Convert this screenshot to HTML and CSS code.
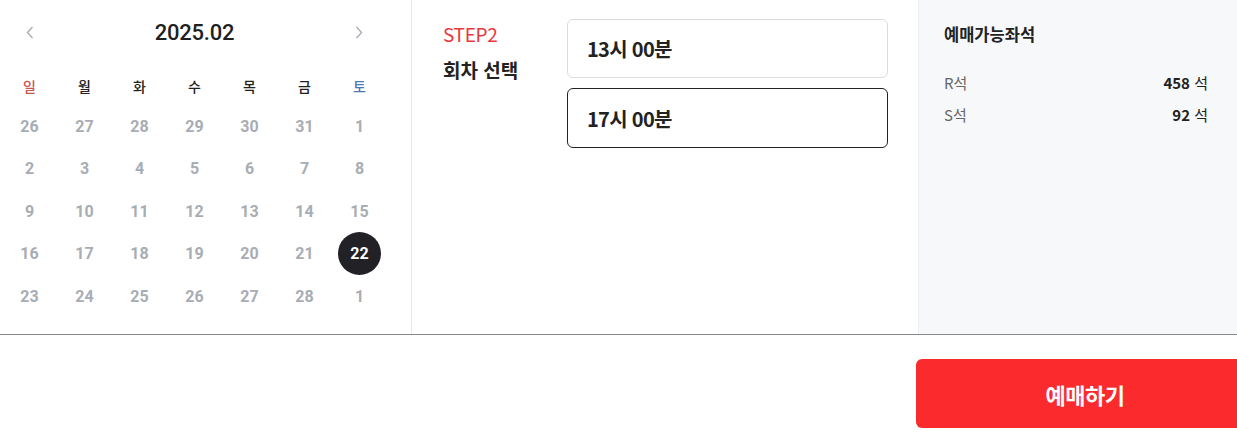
FILE: index.html
```html
<!DOCTYPE html>
<html lang="ko">
<head>
<meta charset="utf-8">
<link rel="stylesheet" href="styles.css">
</head>
<body>
<div class="page">
  <div class="top">
    <section class="calendar">
      <div class="cal-head">
        <button class="nav prev" aria-label="이전 달"><svg width="8" height="13" viewBox="0 0 8 13"><path d="M6.5 1 L1.5 6.5 L6.5 12" fill="none" stroke="#a9adb5" stroke-width="1.4"/></svg></button>
        <div class="month">2025.02</div>
        <button class="nav next" aria-label="다음 달"><svg width="8" height="13" viewBox="0 0 8 13"><path d="M1.5 1 L6.5 6.5 L1.5 12" fill="none" stroke="#a9adb5" stroke-width="1.4"/></svg></button>
      </div>
      <div class="grid">
        <div class="wd sun">일</div><div class="wd">월</div><div class="wd">화</div><div class="wd">수</div><div class="wd">목</div><div class="wd">금</div><div class="wd sat">토</div>
        <div class="d">26</div><div class="d">27</div><div class="d">28</div><div class="d">29</div><div class="d">30</div><div class="d">31</div><div class="d">1</div>
        <div class="d">2</div><div class="d">3</div><div class="d">4</div><div class="d">5</div><div class="d">6</div><div class="d">7</div><div class="d">8</div>
        <div class="d">9</div><div class="d">10</div><div class="d">11</div><div class="d">12</div><div class="d">13</div><div class="d">14</div><div class="d">15</div>
        <div class="d">16</div><div class="d">17</div><div class="d">18</div><div class="d">19</div><div class="d">20</div><div class="d">21</div><div class="d"><span class="sel">22</span></div>
        <div class="d">23</div><div class="d">24</div><div class="d">25</div><div class="d">26</div><div class="d">27</div><div class="d">28</div><div class="d">1</div>
      </div>
    </section>
    <section class="session">
      <div class="label">
        <div class="step">STEP2</div>
        <div class="title">회차 선택</div>
      </div>
      <div class="times">
        <div class="time">13시 00분</div>
        <div class="time active">17시 00분</div>
      </div>
    </section>
    <aside class="seats">
      <div class="seats-title">예매가능좌석</div>
      <div class="seat-row"><span class="grade">R석</span><span class="count"><b>458</b> 석</span></div>
      <div class="seat-row"><span class="grade">S석</span><span class="count"><b>92</b> 석</span></div>
    </aside>
  </div>
  <div class="bottom">
    <button class="book">예매하기</button>
  </div>
</div>
</body>
</html>
```
FILE: styles.css
```css
* { box-sizing: border-box; }
html, body { margin: 0; padding: 0; background: #fff; }
body {
  font-family: "Noto Sans CJK KR", "Noto Sans", sans-serif;
  color: #222;
  overflow: hidden;
  width: 1237px;
  height: 436px;
}
.page { width: 1237px; }
.top {
  display: flex;
  height: 335px;
  border-bottom: 1px solid #8a8a8a;
}
.calendar {
  width: 412px;
  border-right: 1px solid #e8e8e8;
  padding-left: 2px;
}
.cal-head {
  height: 67px;
  width: 385px;
  display: flex;
  align-items: center;
  justify-content: space-between;
  padding: 0 24px 2px 24px;
}
.nav {
  border: 0;
  background: none;
  padding: 0;
  width: 8px;
  height: 13px;
  display: flex;
}
.month {
  font-family: Roboto, "Noto Sans", sans-serif;
  font-size: 22px;
  font-weight: 500;
  color: #1f1f1f;
  letter-spacing: -0.2px;
}
.grid {
  display: grid;
  grid-template-columns: repeat(7, 55px);
  grid-template-rows: 38px repeat(5, 42.5px);
  width: 385px;
}
.wd, .d {
  display: flex;
  align-items: center;
  justify-content: center;
}
.wd {
  font-size: 14px;
  font-weight: 500;
  color: #222;
}
.wd.sun { color: #c9564e; }
.wd.sat { color: #4f79ae; }
.d {
  font-family: Roboto, "Noto Sans", sans-serif;
  font-size: 16px;
  font-weight: 700;
  color: #a8adb4;
}
.sel {
  width: 43px;
  height: 43px;
  border-radius: 50%;
  background: #222226;
  color: #fff;
  display: flex;
  align-items: center;
  justify-content: center;
}
.session {
  flex: 1;
  display: flex;
  padding: 19px 0 0 31px;
}
.label { width: 124px; padding-top: 1px; }
.step {
  color: #e8383d;
  font-size: 19px;
  line-height: 28px;
  letter-spacing: -0.3px;
}
.title {
  font-size: 19px;
  font-weight: 700;
  line-height: 28px;
  margin-top: 8px;
  color: #222;
}
.times {
  display: flex;
  flex-direction: column;
  gap: 10px;
  width: 321px;
}
.time {
  height: 59px;
  border: 1px solid #dcdcdc;
  border-radius: 6px;
  display: flex;
  align-items: center;
  padding-left: 19px;
  font-size: 20px;
  font-weight: 700;
  color: #222;
  letter-spacing: -0.7px;
}
.time.active { border-color: #222; height: 60px; }
.seats {
  width: 319px;
  background: #f7f8fa;
  border-left: 1px solid #eceef1;
  padding: 22px 29px 0 25px;
}
.seats-title {
  font-size: 16.5px;
  font-weight: 700;
  color: #222;
  line-height: 24px;
  margin-bottom: 20px;
}
.seat-row {
  display: flex;
  justify-content: space-between;
  align-items: center;
  height: 32px;
  font-size: 15px;
}
.grade { color: #666; }
.count { color: #222; }
.count b { font-weight: 700; }
.bottom {
  display: flex;
  justify-content: flex-end;
  padding-top: 24px;
}
.book {
  width: 338px;
  height: 69px;
  margin-right: -17px;
  border: 0;
  border-radius: 6px;
  background: #fb2a2c;
  color: #fff;
  font-family: "Noto Sans CJK KR", sans-serif;
  font-size: 22px;
  font-weight: 700;
  letter-spacing: -0.5px;
}
```
